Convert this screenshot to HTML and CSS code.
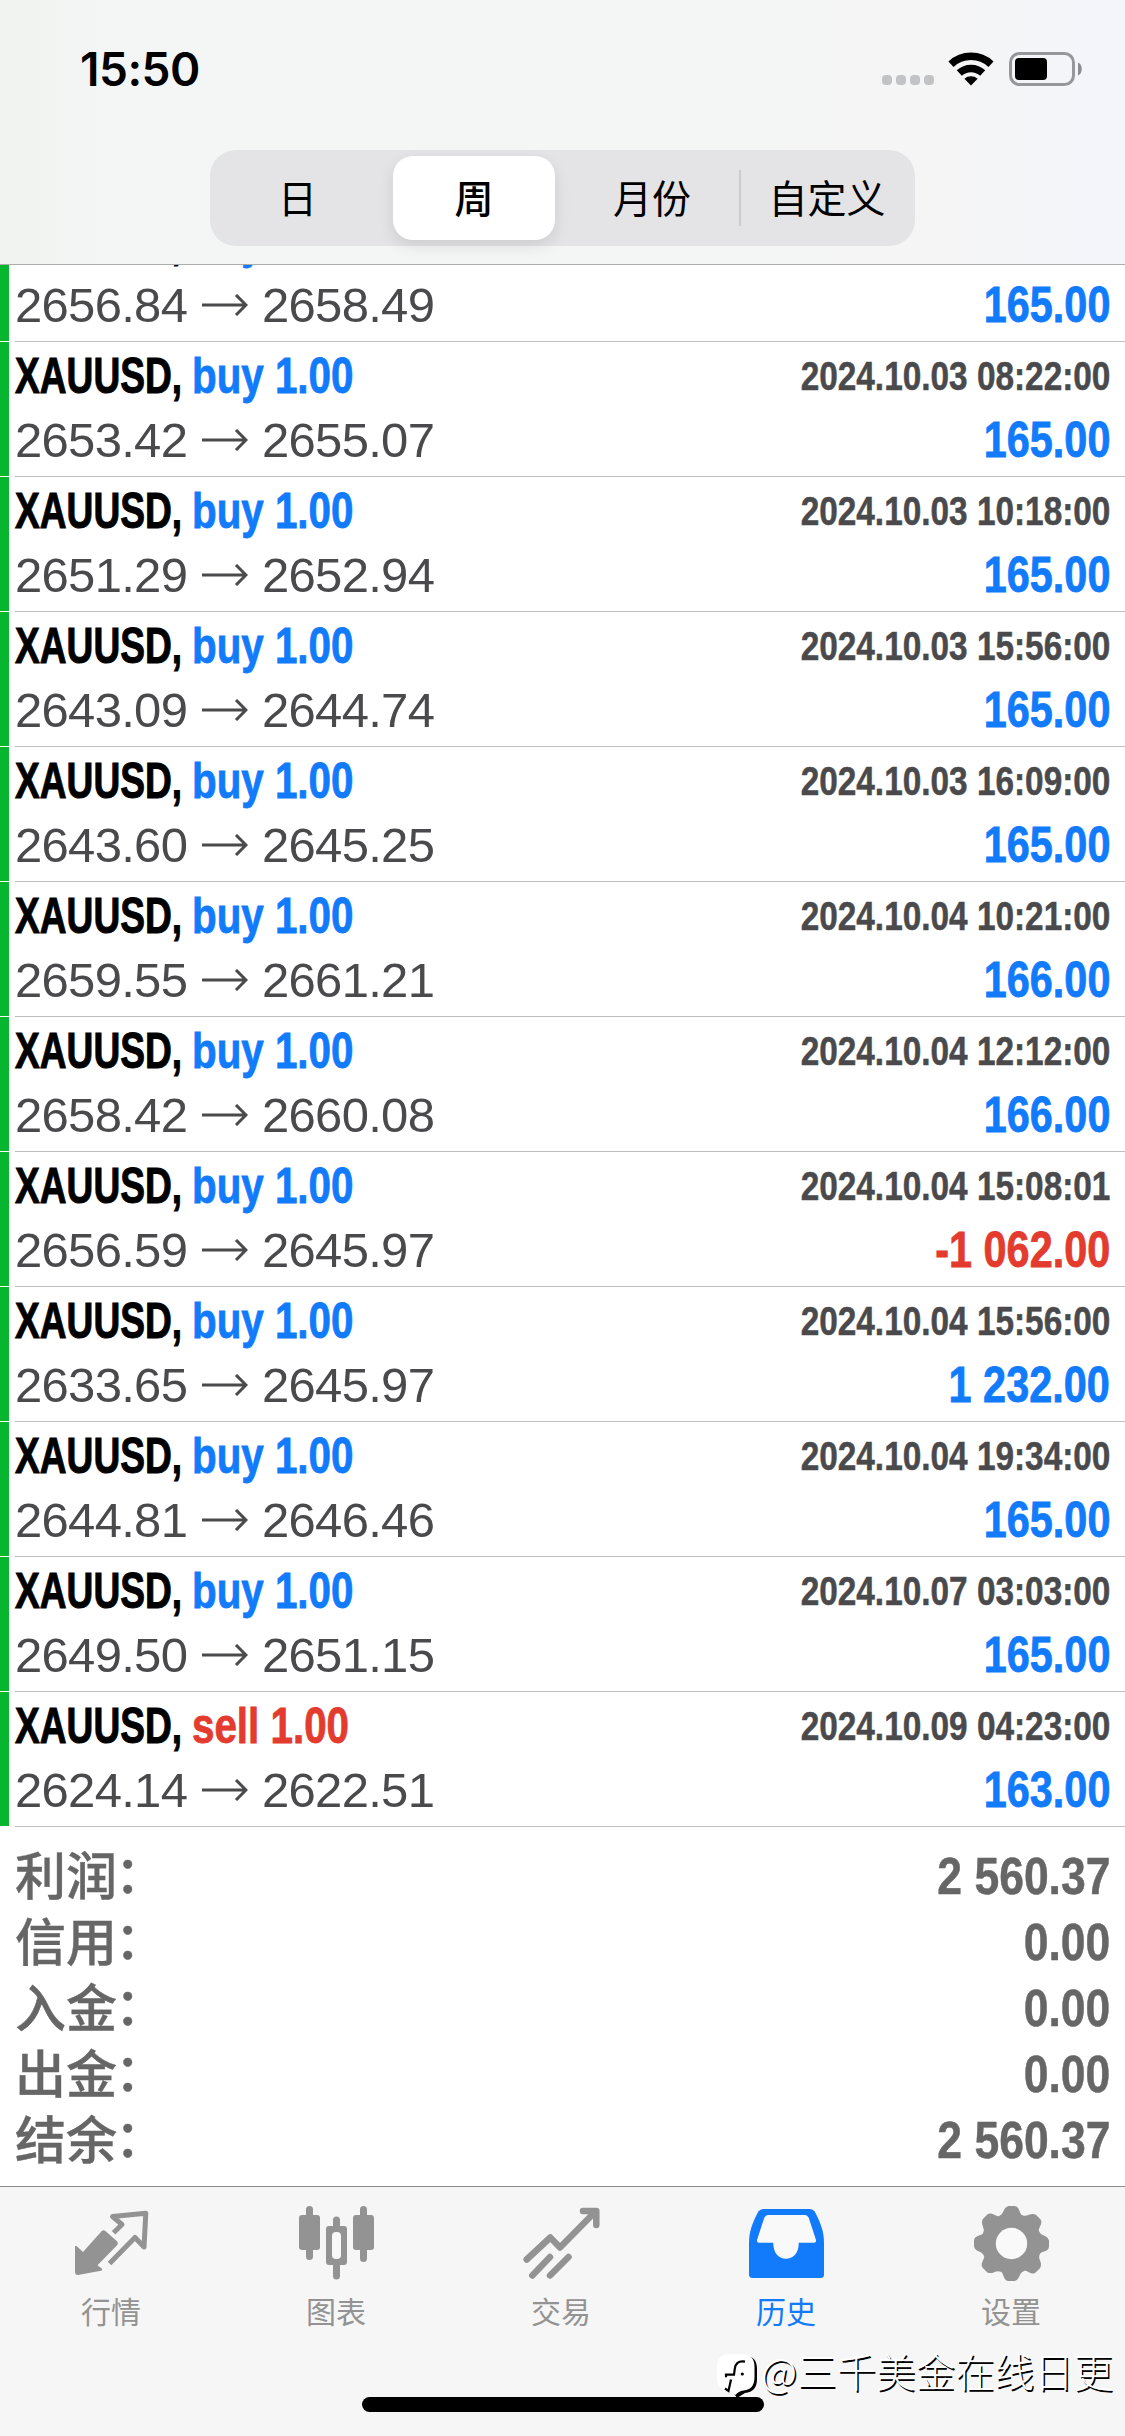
FILE: index.html
```html
<!DOCTYPE html>
<html lang="zh-CN">
<head>
<meta charset="utf-8">
<title>历史</title>
<link rel="stylesheet" href="styles.css">
</head>
<body>
<div class="screen">
  <header class="header">
    <div class="status">
      <span class="time">15:50</span>
      <div class="indicators">
        <div class="dots"><i></i><i></i><i></i><i></i></div>
        <svg class="wifi" width="46" height="34" viewBox="0 0 46 34">
          <path d="M23 33.500l-6.600-6.800a10 10 0 0 1 13.200 0z"/>
          <path class="arc" d="M11.300 21a17.200 17.200 0 0 1 23.400 0"/>
          <path class="arc" d="M3 12.200a29.300 29.300 0 0 1 40 0"/>
        </svg>
        <svg class="battery" width="74" height="34" viewBox="0 0 74 34">
          <rect class="shell" x="1.5" y="1.5" width="63" height="31" rx="9"/>
          <rect x="6" y="6" width="32" height="22" rx="4"/>
          <path class="cap" d="M69 10.500c5 2 5 11 0 13z"/>
        </svg>
      </div>
    </div>
    <nav class="segments">
      <span class="segment">日</span>
      <span class="segment selected">周</span>
      <span class="segment month">月份</span>
      <span class="segment divided">自定义</span>
    </nav>
  </header>

  <main class="list" id="list"></main>

  <section class="summary">
    <div class="total"><span class="label">利润<span class="colon">：</span></span><span class="sum">2 560.37</span></div>
    <div class="total"><span class="label">信用<span class="colon">：</span></span><span class="sum">0.00</span></div>
    <div class="total"><span class="label">入金<span class="colon">：</span></span><span class="sum">0.00</span></div>
    <div class="total"><span class="label">出金<span class="colon">：</span></span><span class="sum">0.00</span></div>
    <div class="total"><span class="label">结余<span class="colon">：</span></span><span class="sum">2 560.37</span></div>
  </section>

  <footer class="tabs">
    <div class="tab">
      <svg width="80" height="84" viewBox="0 0 80 84">
        <path class="solid" d="M4 40.500q.5-1.500 2 0l6 5.500 18.800-21q1.800-1.600 3.600 0L46.300 35.500q1.200 1.500 0 3.500L26.500 59.300l4.500 3.500q1 1.500-1 2L7 69q-3 0-3-3z"/>
        <path class="line" d="M42.600 26.700l8.400-8.200-9.500-8L74.800 7.300 73 41 64 31.500 38.500 57.500"/>
      </svg>
      <span>行情</span>
    </div>
    <div class="tab">
      <svg width="80" height="84" viewBox="0 0 80 84">
        <rect class="solid" x="3" y="9" width="21" height="35" rx="3"/>
        <path class="wick" d="M13.500 3.500v47M67.500 3.500v49M40.500 14v56"/>
        <rect class="solid" x="57" y="9" width="21" height="35" rx="3"/>
        <rect class="solid" x="30" y="20" width="21" height="39" rx="3"/>
        <rect class="hole" x="36" y="26" width="9" height="27" rx="4"/>
      </svg>
      <span>图表</span>
    </div>
    <div class="tab">
      <svg width="80" height="84" viewBox="0 0 80 84">
        <path class="stroke" d="M5.700 53.500L29.300 31.500l9.700 10L73 7M62 5h13.300v14M11.300 69.500L29 51M29 69.500L47.500 51"/>
      </svg>
      <span>交易</span>
    </div>
    <div class="tab active">
      <svg width="80" height="84" viewBox="0 0 80 84">
        <path class="solid" d="M18 3h45.500q4 0 6 4C75 18 78 26 78 37v31.500q0 3.500-3.500 3.500h-68Q3 72 3 68.500V37C3 26 6 18 11.500 7q2-4 6.500-4z"/>
        <path class="hole" d="M22.500 9h36q3 0 4.300 3l7.200 22q.5 2.800-2 2.800H52.700C53 46 48 52.800 40 52.800S27 46 27.300 36.800H13q-2.500 0-2-2.800l7.200-22q1.300-3 4.300-3z"/>
      </svg>
      <span>历史</span>
    </div>
    <div class="tab">
      <svg width="80" height="84" viewBox="0 0 80 84">
        <g class="solid" id="gear"></g>
        <circle class="hole" cx="40.500" cy="37.500" r="15.700"/>
      </svg>
      <span>设置</span>
    </div>
    <div class="home"></div>
    <div class="watermark">
      <svg width="44" height="46" viewBox="0 0 44 46">
        <path d="M14 4h14q12 0 12 13v10q0 13-12 14l-8 5-4-6z" fill="#000"/>
        <path d="M13 2h12q12.500 0 12.500 13v10q0 12.500-11 13.500-5 .5-8 4.500l-5-4Q0 39 0 26V15Q0 2 13 2z" fill="#fff"/>
        <path d="M28 9.700c-7-1.200-9.500 2-10.200 7l-.8 6H9v2.500M8 36.500l3.500 2.500 2.500-11.500" fill="none" stroke="#000" stroke-width="2.200"/>
        <circle cx="25.300" cy="22" r="1.600"/>
      </svg>
      <span>@三千美金在线日更</span>
    </div>
  </footer>
</div>
<script src="app.js"></script>
</body>
</html>
```
FILE: styles.css
```css
* { box-sizing: border-box; }
body { margin: 0; background: #fff; }
.screen {
  width: 1125px; height: 2436px; overflow: hidden;
  display: flex; flex-direction: column;
  font-family: "Liberation Sans", "Noto Sans CJK SC", sans-serif;
}
.header {
  flex: none; height: 265px; border-bottom: 1px solid #acacac;
  background: linear-gradient(90deg, #f1f3f0 0, #f4f5f5 10%, #f5f5f6 85%, #f3f5fb 100%);
  display: flex; flex-direction: column; align-items: center;
}
.status {
  width: 100%; height: 150px; padding: 42px 42px 0 80px;
  display: flex; justify-content: space-between; align-items: flex-start;
}
.time { font: 600 46px/54px Inter, sans-serif; letter-spacing: -0.5px; }
.indicators { display: flex; padding-top: 10px; }
.dots { display: flex; gap: 4px; padding-top: 23px; margin-right: 14px; }
.dots i { width: 10px; height: 10px; border-radius: 4px; background: #c2c3c5; }
.wifi { margin-right: 15px; }
.arc { fill: none; stroke: #000; stroke-width: 7.5; }
.shell { fill: none; stroke: #97979b; stroke-width: 3; }
.cap { fill: #8c8c90; }

.segments {
  width: 705px; height: 96px; border-radius: 26px; background: #e4e4e6;
  display: grid; grid-template-columns: 175px 174px 180px 176px; padding: 6px 0;
}
.segment {
  font: 400 39px/80px "Noto Sans CJK SC", sans-serif; text-align: center; position: relative;
}
.segment.selected {
  background: #fff; border-radius: 20px; font-weight: 500; margin: 0 4px 0 8px;
  box-shadow: 0 6px 16px rgba(0,0,0,.1);
}
.segment.month { padding-left: 6px; }
.segment.divided::before {
  content: ""; position: absolute; left: 0; top: 14px; width: 2px; height: 56px; background: #cbcbcd;
}

.list { flex: none; height: 1562px; display: flex; flex-direction: column; justify-content: flex-end; overflow: hidden; }
.row { flex: none; height: 135px; display: flex; border-bottom: 1px solid #fff; }
.bar { width: 9px; background: #07b52e; margin-right: 6px; }
.cell { flex: 1; height: 135px; border-bottom: 1px solid #bfbfc1; padding: 7px 15px 0 0; }
.line-top, .line-bottom { display: flex; justify-content: space-between; height: 63px; line-height: 54px; }
.line-bottom { line-height: 56px; }
.narrow { font-weight: 700; white-space: nowrap; }
.deal { display: flex; font-size: 49.5px; }
.symbol { width: 177px; transform: scaleX(.75); transform-origin: left; -webkit-text-stroke: 1px; }
.side { transform: scaleX(.815); transform-origin: left; -webkit-text-stroke: .8px; }
.buy, .profit { color: #117bfb; }
.sell, .loss { color: #e33b2e; }
.date { font-size: 40px; color: #4a4a4d; transform: scaleX(.834); transform-origin: right; -webkit-text-stroke: .5px; }
.prices { height: 56px; font-size: 49px; color: #4a4a4d; display: flex; align-items: center; }
.price { width: 173px; letter-spacing: -.7px; }
.prices svg { margin: 0 14px; fill: none; stroke: #4a4a4d; stroke-width: 3; }
.amount { font-size: 49.5px; transform: scaleX(.836); transform-origin: right; -webkit-text-stroke: .8px; }

.summary { flex: 1; padding: 16px 15px 0; color: #666; }
.total { display: flex; justify-content: space-between; height: 66px; line-height: 66px; }
.label { font: 500 51px/61px "Noto Sans CJK SC", sans-serif; -webkit-text-stroke: .4px; }
.colon { position: relative; left: -2px; top: -2px; }
.sum { font-weight: 700; font-size: 52px; transform: scaleX(.855); transform-origin: right; -webkit-text-stroke: .5px; }

.tabs {
  flex: none; height: 250px; border-top: 1px solid #8c8c8c; background: #f6f6f6;
  display: grid; grid-template-columns: repeat(5, 1fr); position: relative;
}
.tab {
  color: #939393; display: flex; flex-direction: column; align-items: center; padding: 19px 3px 0 0;
  font: 400 30px/40px "Noto Sans CJK SC", sans-serif;
}
.tab.active { color: #117bfb; }
.solid { fill: currentColor; }
.hole { fill: #f9f9f9; }
.line { fill: none; stroke: currentColor; stroke-width: 5; stroke-linejoin: round; }
.wick { fill: none; stroke: currentColor; stroke-width: 7; stroke-linecap: round; }
.stroke { fill: none; stroke: currentColor; stroke-width: 6.5; stroke-linecap: round; stroke-linejoin: round; }
.home { position: absolute; left: 362px; top: 210px; width: 402px; height: 15px; border-radius: 8px; background: #000; }
.watermark {
  position: absolute; left: 717px; top: 165px; display: flex; color: #fff;
  font: 300 39.500px/36px "Noto Sans CJK SC", sans-serif; text-shadow: 1.500px 1.500px 0.500px #000; white-space: nowrap;
}
```
FILE: app.js
```js
const deals = [
  ["buy", "2024.10.03 08:10:00", "2656.84", "2658.49", "165.00"],
  ["buy", "2024.10.03 08:22:00", "2653.42", "2655.07", "165.00"],
  ["buy", "2024.10.03 10:18:00", "2651.29", "2652.94", "165.00"],
  ["buy", "2024.10.03 15:56:00", "2643.09", "2644.74", "165.00"],
  ["buy", "2024.10.03 16:09:00", "2643.60", "2645.25", "165.00"],
  ["buy", "2024.10.04 10:21:00", "2659.55", "2661.21", "166.00"],
  ["buy", "2024.10.04 12:12:00", "2658.42", "2660.08", "166.00"],
  ["buy", "2024.10.04 15:08:01", "2656.59", "2645.97", "-1 062.00"],
  ["buy", "2024.10.04 15:56:00", "2633.65", "2645.97", "1 232.00"],
  ["buy", "2024.10.04 19:34:00", "2644.81", "2646.46", "165.00"],
  ["buy", "2024.10.07 03:03:00", "2649.50", "2651.15", "165.00"],
  ["sell", "2024.10.09 04:23:00", "2624.14", "2622.51", "163.00"],
];
document.getElementById("list").innerHTML = deals.map(([side, date, open, close, amount]) => `
  <div class="row"><div class="bar"></div><div class="cell">
    <div class="line-top"><span class="narrow deal"><span class="symbol">XAUUSD,</span><span class="side ${side}">${side} 1.00</span></span><span class="narrow date">${date}</span></div>
    <div class="line-bottom"><span class="prices"><span class="price">${open}</span><svg width="46" height="22" viewBox="0 0 46 22"><path d="M0 11h44M34 1l10 10-10 10"/></svg><span class="price">${close}</span></span><span class="narrow amount ${amount[0] === "-" ? "loss" : "profit"}">${amount}</span></div>
  </div></div>`).join("");

let teeth = "";
for (let i = 0; i < 8; i++) {
  teeth += `<path d="M28 10q3-1 4.500-5t5-5h6q3.500 0 5 5t4.500 5l-5 15h-15z" transform="rotate(${i * 45} 40.5 37.5)"/>`;
}
document.getElementById("gear").innerHTML = teeth + '<circle cx="40.5" cy="37.5" r="29"/>';
```
